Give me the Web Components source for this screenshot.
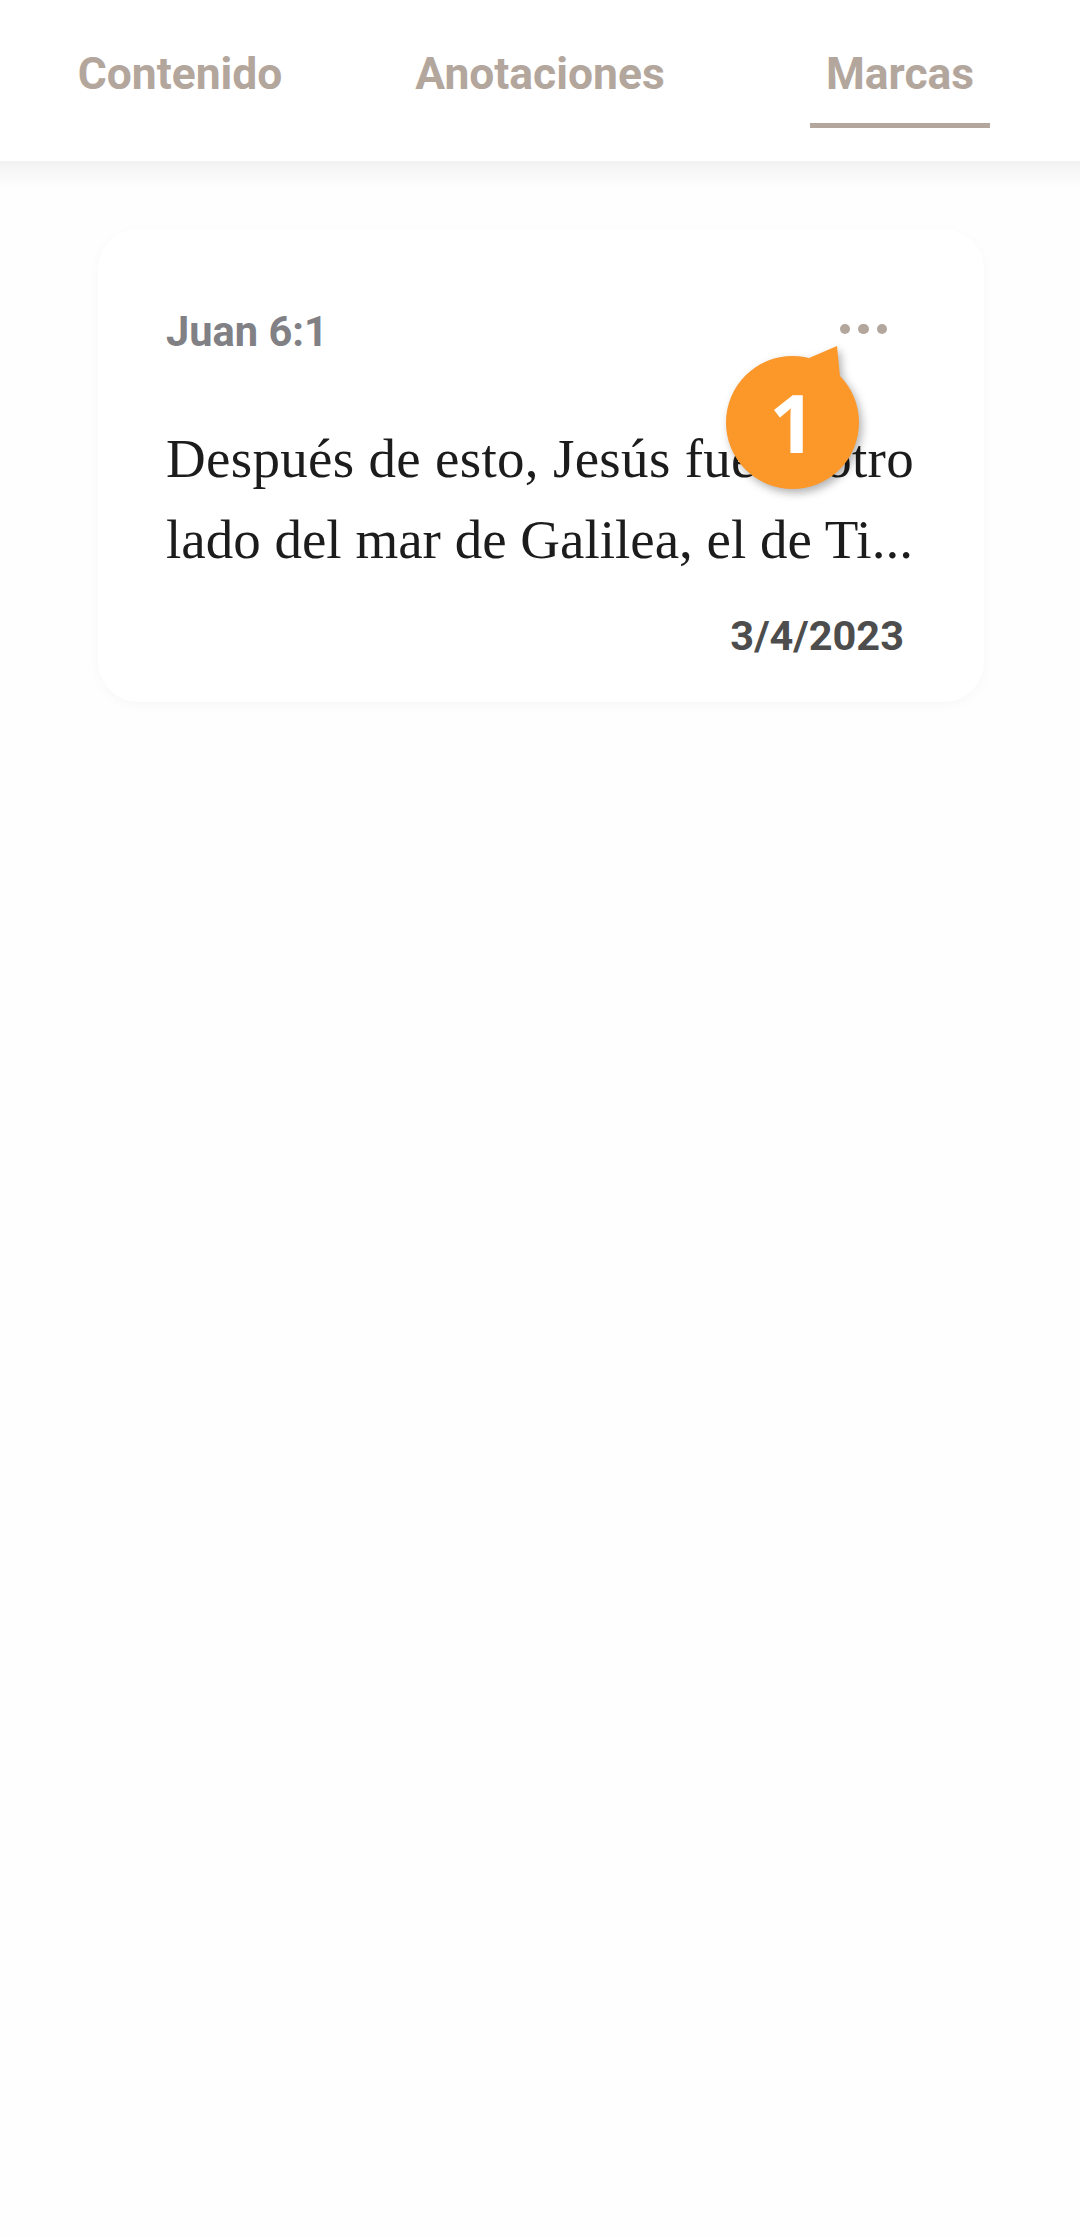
<!DOCTYPE html>
<html lang="es">
<head>
<meta charset="utf-8">
<style>
  html, body { margin: 0; background: #fefefe; }
  body { width: 1080px; height: 2237px; overflow: hidden; font-family: Roboto, sans-serif; }
</style>
</head>
<body>
<tab-bar>
  <tab-item>Contenido</tab-item>
  <tab-item>Anotaciones</tab-item>
  <tab-item active>Marcas</tab-item>
</tab-bar>
<mark-list>
  <mark-card ref="Juan 6:1" date="3/4/2023">
    <span style="letter-spacing: .3px">Después de esto, Jesús fue al otro</span>
    <span>lado del mar de Galilea, el de Ti...</span>
    <step-badge slot="badge">1</step-badge>
  </mark-card>
</mark-list>

<script>
class TabBar extends HTMLElement {
  constructor() {
    super();
    this.attachShadow({ mode: "open" });
  }
  connectedCallback() {
    this.shadowRoot.innerHTML = `
      <style>
        :host {
          display: grid;
          grid-template-columns: repeat(3, 1fr);
          height: 161px;
          background: #fff;
          position: relative;
        }
        :host::after {
          content: "";
          position: absolute;
          left: 0;
          right: 0;
          top: 100%;
          height: 26px;
          background: linear-gradient(#f2f2f2, rgba(254, 254, 254, 0));
        }
      </style>
      <slot></slot>
    `;
  }
}

class TabItem extends HTMLElement {
  constructor() {
    super();
    this.attachShadow({ mode: "open" });
  }
  connectedCallback() {
    this.shadowRoot.innerHTML = `
      <style>
        :host {
          display: flex;
          flex-direction: column;
          align-items: center;
          padding-top: 50px;
          font: 700 44.4px/48px Roboto, sans-serif;
          color: #b3a69c;
        }
        .line {
          width: 180px;
          height: 5px;
          margin-top: 25px;
          background: transparent;
        }
        :host([active]) .line { background: #b3a69c; }
      </style>
      <span><slot></slot></span>
      <div class="line"></div>
    `;
  }
}

class MarkList extends HTMLElement {
  constructor() {
    super();
    this.attachShadow({ mode: "open" });
  }
  connectedCallback() {
    this.shadowRoot.innerHTML = `
      <style>
        :host {
          display: block;
          padding: 68px 96px 0 98px;
        }
      </style>
      <slot></slot>
    `;
  }
}

class MarkCard extends HTMLElement {
  constructor() {
    super();
    this.attachShadow({ mode: "open" });
  }
  connectedCallback() {
    this.shadowRoot.innerHTML = `
      <style>
        :host {
          display: block;
          position: relative;
          height: 473px;
          box-sizing: border-box;
          padding: 79px 81px 0 68px;
          background: #fff;
          border-radius: 40px;
          box-shadow: 0 3px 12px rgba(0, 0, 0, 0.03);
        }
        .top {
          display: flex;
          justify-content: space-between;
          align-items: center;
          height: 48px;
        }
        .ref {
          font: 700 41.6px/48px Roboto, sans-serif;
          color: #808085;
        }
        .dots {
          display: flex;
          gap: 8px;
          margin-top: -6px;
          margin-right: 16px;
        }
        .dots i {
          width: 10.5px;
          height: 10.5px;
          border-radius: 50%;
          background: #b3a69c;
        }
        .text {
          margin-top: 62px;
          font: 400 55px/81px "Liberation Serif", serif;
          color: #1c1c1c;
          white-space: nowrap;
        }
        .text ::slotted(span) { display: block; }
        .date {
          margin-top: 32px;
          margin-right: -1px;
          text-align: right;
          font: 700 41.5px/48px Roboto, sans-serif;
          color: #4d4d4d;
        }
      </style>
      <div class="top">
        <span class="ref">${this.getAttribute("ref")}</span>
        <span class="dots"><i></i><i></i><i></i></span>
      </div>
      <div class="text"><slot></slot></div>
      <div class="date">${this.getAttribute("date")}</div>
      <slot name="badge"></slot>
    `;
  }
}

class StepBadge extends HTMLElement {
  constructor() {
    super();
    this.attachShadow({ mode: "open" });
  }
  connectedCallback() {
    this.shadowRoot.innerHTML = `
      <style>
        :host {
          position: absolute;
          left: 628px;
          top: 117px;
          width: 133px;
          height: 143px;
          display: block;
        }
        svg {
          position: absolute;
          left: 0;
          top: 0;
          overflow: visible;
          filter: drop-shadow(3px 4px 4px rgba(0, 0, 0, 0.3));
        }
        .num {
          position: absolute;
          left: 0;
          top: 9px;
          width: 133px;
          height: 133px;
          display: flex;
          align-items: center;
          justify-content: center;
          font: 700 81px/1 "Open Sans", sans-serif;
          color: #fff;
        }
      </style>
      <svg width="133" height="143" viewBox="0 0 133 143">
        <circle cx="66.5" cy="76.5" r="66.5" fill="#fc9729"/>
        <path d="M83 12 L111 0 L114 31 Z" fill="#fc9729"/>
      </svg>
      <div class="num"><slot></slot></div>
    `;
  }
}

customElements.define("tab-bar", TabBar);
customElements.define("tab-item", TabItem);
customElements.define("mark-list", MarkList);
customElements.define("mark-card", MarkCard);
customElements.define("step-badge", StepBadge);
</script>
</body>
</html>
